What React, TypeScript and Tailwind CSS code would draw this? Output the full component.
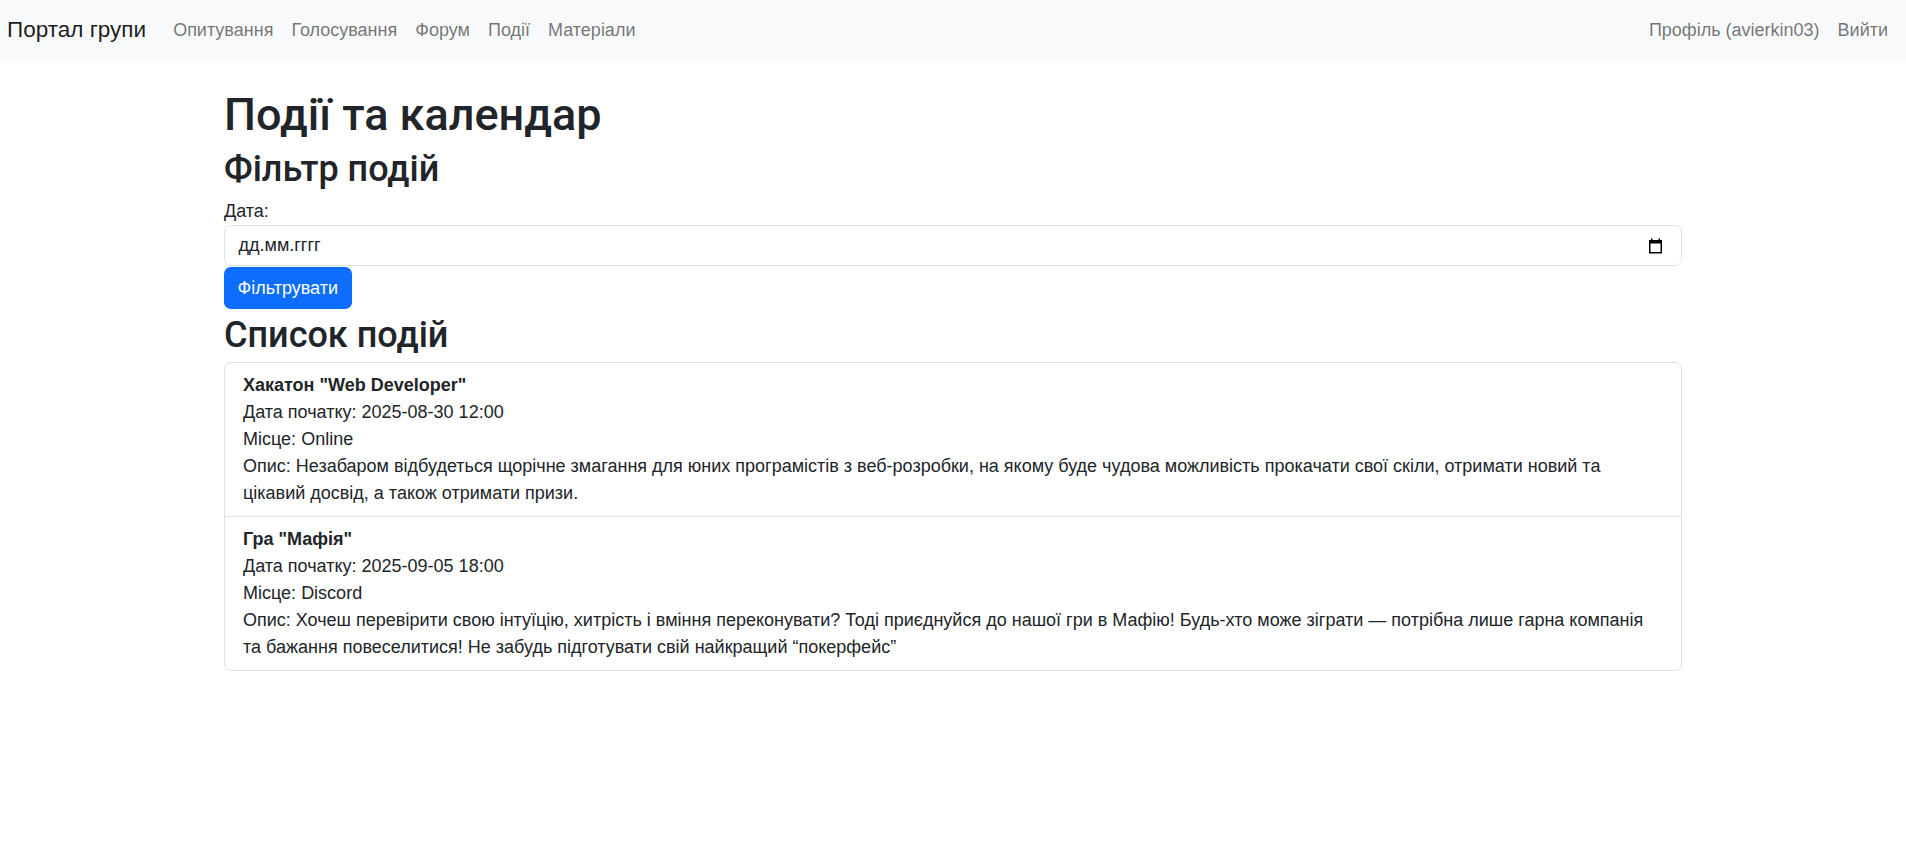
import React from "react";

const events = [
  {
    title: 'Хакатон "Web Developer"',
    date: "2025-08-30 12:00",
    place: "Online",
    desc: "Незабаром відбудеться щорічне змагання для юних програмістів з веб-розробки, на якому буде чудова можливість прокачати свої скіли, отримати новий та цікавий досвід, а також отримати призи.",
  },
  {
    title: 'Гра "Мафія"',
    date: "2025-09-05 18:00",
    place: "Discord",
    desc: "Хочеш перевірити свою інтуїцію, хитрість і вміння переконувати? Тоді приєднуйся до нашої гри в Мафію! Будь-хто може зіграти — потрібна лише гарна компанія та бажання повеселитися! Не забудь підготувати свій найкращий “покерфейс”",
  },
];

function CalendarIcon() {
  return (
    <svg width="15" height="16" viewBox="0 0 15 16" fill="none">
      <rect x="1.75" y="2.75" width="11.5" height="12" stroke="#000" strokeWidth="1.5" />
      <rect x="1" y="2" width="13" height="3.5" fill="#000" />
      <rect x="3" y="0.5" width="1.5" height="2" fill="#000" />
      <rect x="10.5" y="0.5" width="1.5" height="2" fill="#000" />
    </svg>
  );
}

export default function App() {
  const links = ["Опитування", "Голосування", "Форум", "Події", "Матеріали"];
  return (
    <div className="min-h-screen bg-white text-[#212529] font-['Liberation_Sans',Arial,sans-serif] text-[18px] leading-[27px]">
      <nav className="h-[60px] bg-[#f8f9fa] flex items-center pl-[7px] pr-[9px]">
        <span className="text-[22.5px] leading-[34px] text-black/90 mr-[18px]">Портал групи</span>
        <ul className="flex items-center">
          {links.map((l) => (
            <li key={l} className="px-[9px] text-black/55">
              {l}
            </li>
          ))}
        </ul>
        <ul className="flex items-center ml-auto">
          <li className="px-[9px] text-black/55">Профіль (avierkin03)</li>
          <li className="px-[9px] text-black/55">Вийти</li>
        </ul>
      </nav>

      <main className="w-[1458px] mx-auto pt-[28px]">
        <h1 className="font-['Roboto',sans-serif] font-medium text-[45px] leading-[54px] mb-[6px]">
          Події та календар
        </h1>
        <h2 className="font-['Roboto',sans-serif] font-medium text-[36px] leading-[43px] mb-[7px]">
          Фільтр подій
        </h2>
        <div>Дата:</div>
        <div className="h-[41px] border border-[#dee2e6] rounded-[6.75px] flex items-center justify-between pl-[13.5px] pr-[18px]">
          <span className="text-[18px]">дд.мм.гггг</span>
          <CalendarIcon />
        </div>
        <button className="mt-[1px] h-[42px] px-[13.5px] bg-[#0d6efd] text-white rounded-[6.75px] text-[18px]">
          Фільтрувати
        </button>
        <h2 className="font-['Roboto',sans-serif] font-medium text-[36px] leading-[43px] pt-[5px] mb-[5px]">
          Список подій
        </h2>
        <div className="border border-[#dee2e6] rounded-[6.75px]">
          {events.map((e, i) => (
            <div
              key={e.title}
              className={`px-[18px] py-[9px] ${i > 0 ? "border-t border-[#dee2e6]" : ""}`}
            >
              <div className="font-bold">{e.title}</div>
              <div>Дата початку: {e.date}</div>
              <div>Місце: {e.place}</div>
              <div>Опис: {e.desc}</div>
            </div>
          ))}
        </div>
      </main>
    </div>
  );
}
